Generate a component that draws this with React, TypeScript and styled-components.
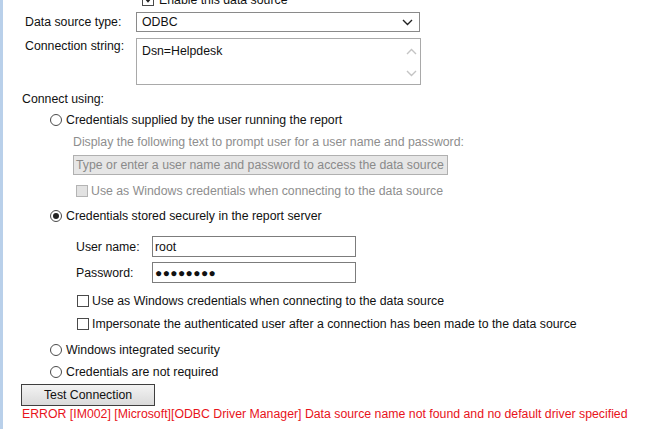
import React from "react";
import styled, { createGlobalStyle } from "styled-components";

const Global = createGlobalStyle`
  html, body { margin: 0; padding: 0; background: #ffffff; }
  body { font-family: "Liberation Sans", Arial, sans-serif; font-size: 12.3px; color: #111; overflow: hidden; }
`;

const Page = styled.div`
  width: 656px;
  height: 429px;
  border-left: 3px solid #b9d0ea;
  box-sizing: border-box;
  display: flex;
  flex-direction: column;
  overflow: hidden;
`;

const Row = styled.div<{ $mt: number; $indent: number; $h?: number }>`
  display: flex;
  align-items: center;
  margin-top: ${(p) => p.$mt}px;
  padding-left: ${(p) => p.$indent}px;
  height: ${(p) => (p.$h ? `${p.$h}px` : "14px")};
  flex-shrink: 0;
  white-space: nowrap;
`;

const FieldRow = styled.div<{ $mt: number; $align?: string }>`
  display: grid;
  grid-template-columns: 111px 285px;
  align-items: ${(p) => p.$align || "center"};
  margin-top: ${(p) => p.$mt}px;
  padding-left: 22px;
  flex-shrink: 0;
`;

const FieldLabel = styled.span<{ $pt?: number }>`
  padding-top: ${(p) => p.$pt || 0}px;
  line-height: 14px;
`;

const Select = styled.div`
  height: 20px;
  box-sizing: border-box;
  width: 284px;
  border: 1px solid #8a8a8a;
  display: flex;
  align-items: center;
  justify-content: space-between;
  padding: 0 6px 0 5px;
  background: #fff;
`;

const TextArea = styled.div`
  height: 47px;
  width: 285px;
  box-sizing: border-box;
  border: 1px solid #a9a9a9;
  display: flex;
  background: #fff;
`;

const TextAreaBody = styled.div`
  flex: 1;
  padding: 5px 0 0 5px;
`;

const ScrollTrack = styled.div`
  width: 17px;
  display: flex;
  flex-direction: column;
  justify-content: space-between;
  align-items: center;
  padding: 9px 0 7px;
`;

const Radio = styled.span<{ $checked?: boolean }>`
  width: 12px;
  height: 12px;
  box-sizing: border-box;
  border: 1px solid #4a4a4a;
  border-radius: 50%;
  background: #fff;
  display: inline-flex;
  align-items: center;
  justify-content: center;
  margin-right: 4px;
  flex-shrink: 0;
  &::after {
    content: "";
    display: ${(p) => (p.$checked ? "block" : "none")};
    width: 6px;
    height: 6px;
    border-radius: 50%;
    background: #222;
  }
`;

const Check = styled.span<{ $disabled?: boolean; $checked?: boolean }>`
  width: 12px;
  height: 12px;
  box-sizing: border-box;
  border: 1px solid ${(p) => (p.$disabled ? "#b4b4b4" : "#4a4a4a")};
  background: ${(p) => (p.$disabled ? "#e2e2e2" : "#fff")};
  margin-right: 3px;
  flex-shrink: 0;
  display: inline-flex;
  align-items: center;
  justify-content: center;
`;

const Muted = styled.span`
  color: #8e8e8e;
`;

const DisabledInput = styled.div`
  width: 375px;
  height: 20px;
  box-sizing: border-box;
  border: 1px solid #b0b0b0;
  background: #e6e6e6;
  color: #8a8a8a;
  display: flex;
  align-items: center;
  padding-left: 2px;
  overflow: hidden;
`;

const CredGrid = styled.div<{ $mt: number }>`
  display: grid;
  grid-template-columns: 76px 204px;
  align-items: center;
  margin-top: ${(p) => p.$mt}px;
  padding-left: 73px;
  flex-shrink: 0;
`;

const TextInput = styled.div`
  height: 21px;
  box-sizing: border-box;
  border: 1px solid #7c7c7c;
  background: #fff;
  display: flex;
  align-items: center;
  padding-left: 2px;
`;

const Dots = styled.span`
  font-size: 12px;
  letter-spacing: 0.4px;
`;

const Button = styled.button`
  margin-top: 5px;
  margin-left: 18px;
  width: 134px;
  height: 22px;
  box-sizing: border-box;
  border: 1px solid #3f3f3f;
  background: linear-gradient(#f3f3f3, #dadada);
  font-family: "Liberation Sans", Arial, sans-serif;
  font-size: 12.3px;
  color: #111;
  padding: 0;
  flex-shrink: 0;
`;

const ErrorText = styled.div`
  margin-top: 1px;
  padding-left: 19px;
  color: #e8131b;
  height: 14px;
  line-height: 14px;
  white-space: nowrap;
  flex-shrink: 0;
`;

const Chevron = ({ color, up }: { color: string; up?: boolean }) => (
  <svg width="11" height="7" viewBox="0 0 11 7">
    <path
      d={up ? "M1 6 L5.5 1.5 L10 6" : "M1 1 L5.5 5.5 L10 1"}
      fill="none"
      stroke={color}
      strokeWidth="1.4"
    />
  </svg>
);

export default function App() {
  return (
    <>
      <Global />
      <Page>
        <Row $mt={-6} $indent={139} $h={12}>
          <Check $checked>
            <svg width="8" height="6" viewBox="0 0 8 6">
              <path d="M1 1 L4 4.5 L7 1" fill="none" stroke="#222" strokeWidth="1.5" />
            </svg>
          </Check>
          <span style={{ marginLeft: 2 }}>Enable this data source</span>
        </Row>

        <FieldRow $mt={6}>
          <FieldLabel>Data source type:</FieldLabel>
          <Select>
            <span>ODBC</span>
            <Chevron color="#222" />
          </Select>
        </FieldRow>

        <FieldRow $mt={6} $align="start">
          <FieldLabel $pt={1}>Connection string:</FieldLabel>
          <TextArea>
            <TextAreaBody>Dsn=Helpdesk</TextAreaBody>
            <ScrollTrack>
              <Chevron color="#c4c4c4" up />
              <Chevron color="#c4c4c4" />
            </ScrollTrack>
          </TextArea>
        </FieldRow>

        <Row $mt={7} $indent={19}>Connect using:</Row>

        <Row $mt={7} $indent={47}>
          <Radio />
          Credentials supplied by the user running the report
        </Row>
        <Row $mt={8} $indent={70}>
          <Muted>Display the following text to prompt user for a user name and password:</Muted>
        </Row>
        <Row $mt={6} $indent={70} $h={20}>
          <DisabledInput>Type or enter a user name and password to access the data source</DisabledInput>
        </Row>
        <Row $mt={9} $indent={73}>
          <Check $disabled />
          <Muted>Use as Windows credentials when connecting to the data source</Muted>
        </Row>

        <Row $mt={11} $indent={47}>
          <Radio $checked />
          Credentials stored securely in the report server
        </Row>

        <CredGrid $mt={13}>
          <span>User name:</span>
          <TextInput>root</TextInput>
        </CredGrid>
        <CredGrid $mt={5}>
          <span>Password:</span>
          <TextInput>
            <Dots>●●●●●●●●</Dots>
          </TextInput>
        </CredGrid>

        <Row $mt={11} $indent={74}>
          <Check />
          Use as Windows credentials when connecting to the data source
        </Row>
        <Row $mt={9} $indent={74}>
          <Check />
          Impersonate the authenticated user after a connection has been made to the data source
        </Row>

        <Row $mt={12} $indent={47}>
          <Radio />
          Windows integrated security
        </Row>
        <Row $mt={8} $indent={47}>
          <Radio />
          Credentials are not required
        </Row>

        <Button>Test Connection</Button>
        <ErrorText>
          ERROR [IM002] [Microsoft][ODBC Driver Manager] Data source name not found and no default driver specified
        </ErrorText>
      </Page>
    </>
  );
}
